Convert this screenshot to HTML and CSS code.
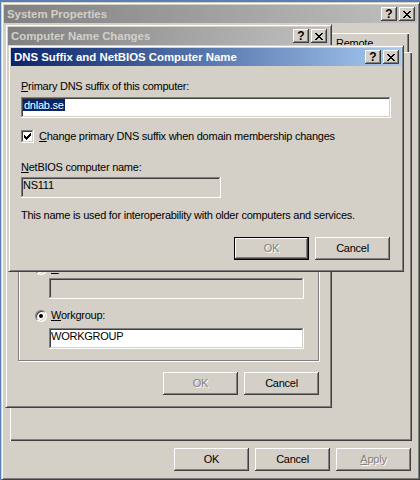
FILE: index.html
```html
<!DOCTYPE html>
<html lang="en">
<head>
    <meta charset="UTF-8">
    <title>System Properties</title>
    <link rel="stylesheet" href="styles.css">
</head>
<body>
    <div class="desk">
        <!-- back window: System Properties -->
        <div class="win sysprop">
            <div class="titlebar inactive">
                <span class="title">System Properties</span>
                <div class="tbtns">
                    <span class="tbtn">?</span>
                    <span class="tbtn"><svg width="8" height="7" viewBox="0 0 8 7"><path d="M0 0h2v1H0zM6 0h2v1H6zM1 1h2v1H1zM5 1h2v1H5zM2 2h4v1H2zM3 3h2v1H3zM2 4h4v1H2zM1 5h2v1H1zM5 5h2v1H5zM0 6h2v1H0zM6 6h2v1H6z"/></svg></span>
                </div>
            </div>
            <div class="tabs">
                <div class="tab">Remote</div>
            </div>
            <div class="panel"></div>
            <div class="btnrow">
                <span class="btn">OK</span>
                <span class="btn">Cancel</span>
                <span class="btn disabled"><u>A</u>pply</span>
            </div>
        </div>

        <!-- middle window: Computer Name Changes -->
        <div class="win cnc">
            <div class="titlebar inactive">
                <span class="title">Computer Name Changes</span>
                <div class="tbtns">
                    <span class="tbtn">?</span>
                    <span class="tbtn"><svg width="8" height="7" viewBox="0 0 8 7"><path d="M0 0h2v1H0zM6 0h2v1H6zM1 1h2v1H1zM5 1h2v1H5zM2 2h4v1H2zM3 3h2v1H3zM2 4h4v1H2zM1 5h2v1H1zM5 5h2v1H5zM0 6h2v1H0zM6 6h2v1H6z"/></svg></span>
                </div>
            </div>
            <div class="cnc-body">
                <div class="group">
                    <div class="radio-row"><span class="radio"></span><span class="hidden-label"><u>D</u>omain:</span></div>
                    <div class="field disabled"></div>
                    <div class="radio-row wg"><span class="radio on"></span><span><u>W</u>orkgroup:</span></div>
                    <div class="field wgfield">WORKGROUP</div>
                </div>
                <div class="btnrow">
                    <span class="btn disabled">OK</span>
                    <span class="btn">Cancel</span>
                </div>
            </div>
        </div>

        <!-- front window: DNS Suffix -->
        <div class="win dns">
            <div class="titlebar active">
                <span class="title">DNS Suffix and NetBIOS Computer Name</span>
                <div class="tbtns">
                    <span class="tbtn">?</span>
                    <span class="tbtn"><svg width="8" height="7" viewBox="0 0 8 7"><path d="M0 0h2v1H0zM6 0h2v1H6zM1 1h2v1H1zM5 1h2v1H5zM2 2h4v1H2zM3 3h2v1H3zM2 4h4v1H2zM1 5h2v1H1zM5 5h2v1H5zM0 6h2v1H0zM6 6h2v1H6z"/></svg></span>
                </div>
            </div>
            <div class="dns-body">
                <div class="label"><u>P</u>rimary DNS suffix of this computer:</div>
                <div class="field first"><span class="sel">dnlab.se</span></div>
                <div class="check-row">
                    <span class="checkbox"><svg width="7" height="7" viewBox="0 0 7 7"><path d="M6 0h1v1H6zM5 1h2v1H5zM0 2h1v1H0zM4 2h3v1H4zM0 3h2v1H0zM3 3h3v1H3zM0 4h5v1H0zM1 5h3v1H1zM2 6h1v1H2z"/></svg></span>
                    <span><u>C</u>hange primary DNS suffix when domain membership changes</span>
                </div>
                <div class="label netbios"><u>N</u>etBIOS computer name:</div>
                <div class="field disabled short">NS111</div>
                <div class="note">This name is used for interoperability with older computers and services.</div>
                <div class="btnrow">
                    <span class="btn default disabled">OK</span>
                    <span class="btn">Cancel</span>
                </div>
            </div>
        </div>
    </div>
</body>
</html>
```

FILE: styles.css
```css
body {
    margin: 0;
    background: #5a7fb5;
    font-family: 'Liberation Sans', Arial, sans-serif;
    font-size: 11px;
    line-height: 13px;
    letter-spacing: -0.25px;
    color: #000;
}
.desk {
    position: relative;
    width: 420px;
    height: 480px;
    overflow: hidden;
}
.win {
    position: absolute;
    box-sizing: border-box;
    display: flex;
    flex-direction: column;
    background: #d4d0c8;
    padding: 2px;
    border: 1px solid;
    border-color: #d4d0c8 #404040 #404040 #d4d0c8;
    box-shadow: inset 1px 1px #fff, inset -1px -1px #808080;
}
.sysprop {
    left: 1px;
    top: 2px;
    width: 419px;
    height: 478px;
}
.cnc {
    left: 5px;
    top: 24px;
    width: 327px;
    height: 384px;
}
.dns {
    left: 8px;
    top: 45px;
    width: 396px;
}

/* title bars */
.titlebar {
    height: 18px;
    flex: none;
    display: flex;
    align-items: center;
    justify-content: space-between;
    padding: 0 2px 0 3px;
    font-size: 11.4px;
    font-weight: bold;
    letter-spacing: 0;
    color: #fff;
}
.titlebar.active {
    background: linear-gradient(to right, #0a246a, #a6caf0);
}
.titlebar.inactive {
    background: linear-gradient(to right, #808080, #c0c0c0);
    color: #d4d0c8;
}
.tbtns {
    display: flex;
    gap: 2px;
}
.tbtn {
    width: 16px;
    height: 14px;
    display: flex;
    align-items: center;
    justify-content: center;
    background: #d4d0c8;
    color: #000;
    font-size: 12px;
    font-weight: bold;
    box-shadow: inset -1px -1px #404040, inset 1px 1px #fff, inset -2px -2px #808080;
}
.tbtn svg {
    shape-rendering: crispEdges;
}

/* buttons */
.btnrow {
    display: flex;
    justify-content: flex-end;
    gap: 6px;
    flex: none;
}
.btn {
    width: 75px;
    height: 23px;
    display: flex;
    align-items: center;
    justify-content: center;
    background: #d4d0c8;
    box-shadow: inset -1px -1px #404040, inset 1px 1px #fff, inset -2px -2px #808080;
}
.btn.default {
    box-shadow: inset 0 0 0 1px #000, inset -2px -2px #404040, inset 2px 2px #fff, inset -3px -3px #808080;
}
.btn.disabled {
    color: #808080;
    text-shadow: 1px 1px 0 #fff;
}

/* System Properties */
.tabs {
    display: flex;
    justify-content: flex-end;
    margin-top: 10px;
    padding-right: 8px;
    flex: none;
}
.tab {
    width: 86px;
    height: 19px;
    box-sizing: border-box;
    padding: 4px 0 0 13px;
    box-shadow: inset 1px 1px #fff, inset -1px 0 #404040, inset -2px 0 #808080;
}
.panel {
    flex: 1;
    margin: 0 5px 0 6px;
    box-shadow: inset 1px 1px #fff, inset -1px -1px #404040, inset -2px -2px #808080;
}
.sysprop .btnrow {
    margin: 7px 6px 6px 0;
}

/* text fields */
.label {
    white-space: nowrap;
}
.field {
    height: 21px;
    box-sizing: border-box;
    padding: 2px 2px;
    background: #fff;
    white-space: nowrap;
    box-shadow: inset -1px -1px #fff, inset 1px 1px #808080, inset -2px -2px #d4d0c8, inset 2px 2px #404040;
}
.field.disabled {
    background: #d4d0c8;
}
.sel {
    background: #0a246a;
    color: #fff;
    padding: 0 1px;
}

/* Computer Name Changes */
.cnc-body {
    flex: 1;
    display: flex;
    flex-direction: column;
    justify-content: flex-end;
    padding: 10px 10px 10px 10px;
}
.group {
    padding: 0 14px 11px 30px;
    border: 1px solid #808080;
    box-shadow: inset 1px 1px #fff, 1px 1px #fff;
}
.radio-row {
    display: flex;
    align-items: center;
    gap: 4px;
    margin-left: -14px;
}
.group .field {
    margin-top: 3px;
}
.radio-row.wg {
    margin-top: 10px;
}
.group .field.wgfield {
    margin-top: 6px;
}
.radio {
    width: 12px;
    height: 12px;
    box-sizing: border-box;
    border-radius: 50%;
    background: #fff;
    border: 1px solid;
    border-color: #808080 #fff #fff #808080;
    box-shadow: inset 1px 1px #404040, inset -1px -1px #d4d0c8;
    display: flex;
    align-items: center;
    justify-content: center;
}
.radio.on::after {
    content: "";
    width: 4px;
    height: 4px;
    border-radius: 50%;
    background: #000;
}
.cnc .btnrow {
    margin-top: 11px;
}

/* DNS Suffix dialog */
.dns-body {
    padding: 14px 10px 9px 10px;
}
.field.first {
    margin-top: 4px;
}
.check-row {
    display: flex;
    align-items: center;
    gap: 5px;
    margin-top: 12px;
    white-space: nowrap;
}
.checkbox {
    width: 13px;
    height: 13px;
    box-sizing: border-box;
    display: flex;
    align-items: center;
    justify-content: center;
    background: #fff;
    box-shadow: inset -1px -1px #fff, inset 1px 1px #808080, inset -2px -2px #d4d0c8, inset 2px 2px #404040;
}
.checkbox svg {
    shape-rendering: crispEdges;
}
.label.netbios {
    margin-top: 18px;
}
.field.short {
    width: 200px;
    margin-top: 3px;
}
.note {
    margin-top: 11px;
    white-space: nowrap;
}
.dns .btnrow {
    margin: 15px 1px 0 0;
}
```
